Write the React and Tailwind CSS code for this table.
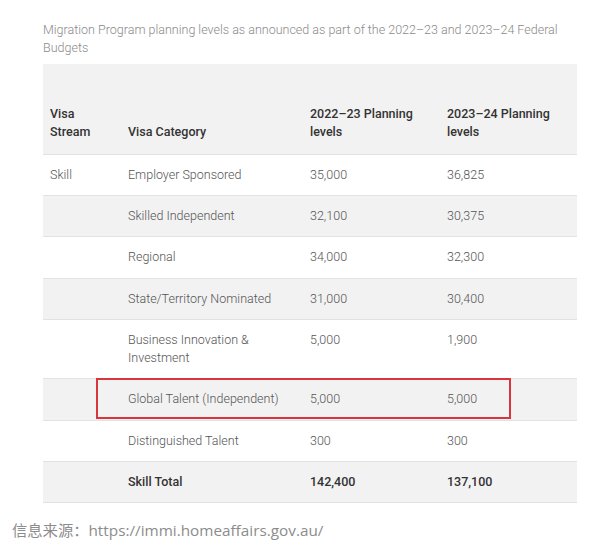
import React from 'react';

const rows = [
    { stream: 'Skill', category: 'Employer Sponsored', a: '35,000', b: '36,825' },
    { stream: '', category: 'Skilled Independent', a: '32,100', b: '30,375' },
    { stream: '', category: 'Regional', a: '34,000', b: '32,300' },
    { stream: '', category: 'State/Territory Nominated', a: '31,000', b: '30,400' },
    { stream: '', category: 'Business Innovation & Investment', a: '5,000', b: '1,900' },
    { stream: '', category: 'Global Talent (Independent)', a: '5,000', b: '5,000' },
    { stream: '', category: 'Distinguished Talent', a: '300', b: '300' },
    { stream: '', category: 'Skill Total', a: '142,400', b: '137,100', total: true },
];

const App = () => {
    return (
        <div className="w-[600px] h-[546px] bg-white relative" style={{ fontFamily: 'Roboto, "Noto Sans", sans-serif' }}>
            <div className="pl-[43px] pt-[21px] w-[577px]">
                <p className="text-[12.5px] leading-[18px] font-light text-[#8a8a8a]">
                    Migration Program planning levels as announced as part of the 2022–23 and 2023–24 Federal Budgets
                </p>
                <div className="relative mt-[7px]">
                    <table className="w-[534px] table-fixed border-collapse text-[12.5px] leading-[18px]">
                        <colgroup>
                            <col className="w-[78px]" />
                            <col className="w-[182px]" />
                            <col className="w-[137px]" />
                            <col className="w-[137px]" />
                        </colgroup>
                        <thead>
                            <tr className="bg-[#f2f2f2] h-[90px] border-b border-[#e2e2e2] text-left text-[#333]">
                                <th className="align-bottom pl-[7px] pr-4 pb-[13px] font-medium">Visa Stream</th>
                                <th className="align-bottom pl-[7px] pb-[13px] font-medium">Visa Category</th>
                                <th className="align-bottom pl-[7px] pr-2 pb-[13px] font-medium">2022–23 Planning levels</th>
                                <th className="align-bottom pl-[7px] pr-2 pb-[13px] font-medium">2023–24 Planning levels</th>
                            </tr>
                        </thead>
                        <tbody>
                            {rows.map((r, i) => (
                                <tr
                                    key={r.category}
                                    className={`border-b border-[#e2e2e2] align-top ${i % 2 === 1 ? 'bg-[#f2f2f2]' : 'bg-white'} ${r.total ? 'text-[#333] font-medium' : 'text-[#555] font-light'}`}
                                >
                                    <td className="pl-[7px] pt-[11px] pb-[11.35px]">{r.stream}</td>
                                    <td className="pl-[7px] pr-[12px] pt-[11px] pb-[11.35px]">{r.category}</td>
                                    <td className="pl-[7px] pt-[11px] pb-[11.35px]">{r.a}</td>
                                    <td className="pl-[7px] pt-[11px] pb-[11.35px]">{r.b}</td>
                                </tr>
                            ))}
                        </tbody>
                    </table>
                    <div className="absolute left-[53px] top-[314px] w-[415px] h-[41px] border-2 border-[#d8363c] pointer-events-none" />
                </div>
            </div>
            <p
                className="absolute left-[12px] top-[519px] text-[15.3px] leading-[22px] text-[#8c8c8c]"
                style={{ fontFamily: '"Open Sans", "Noto Sans CJK SC", sans-serif' }}
            >
                信息来源：https://immi.homeaffairs.gov.au/
            </p>
        </div>
    );
};

export default App;
